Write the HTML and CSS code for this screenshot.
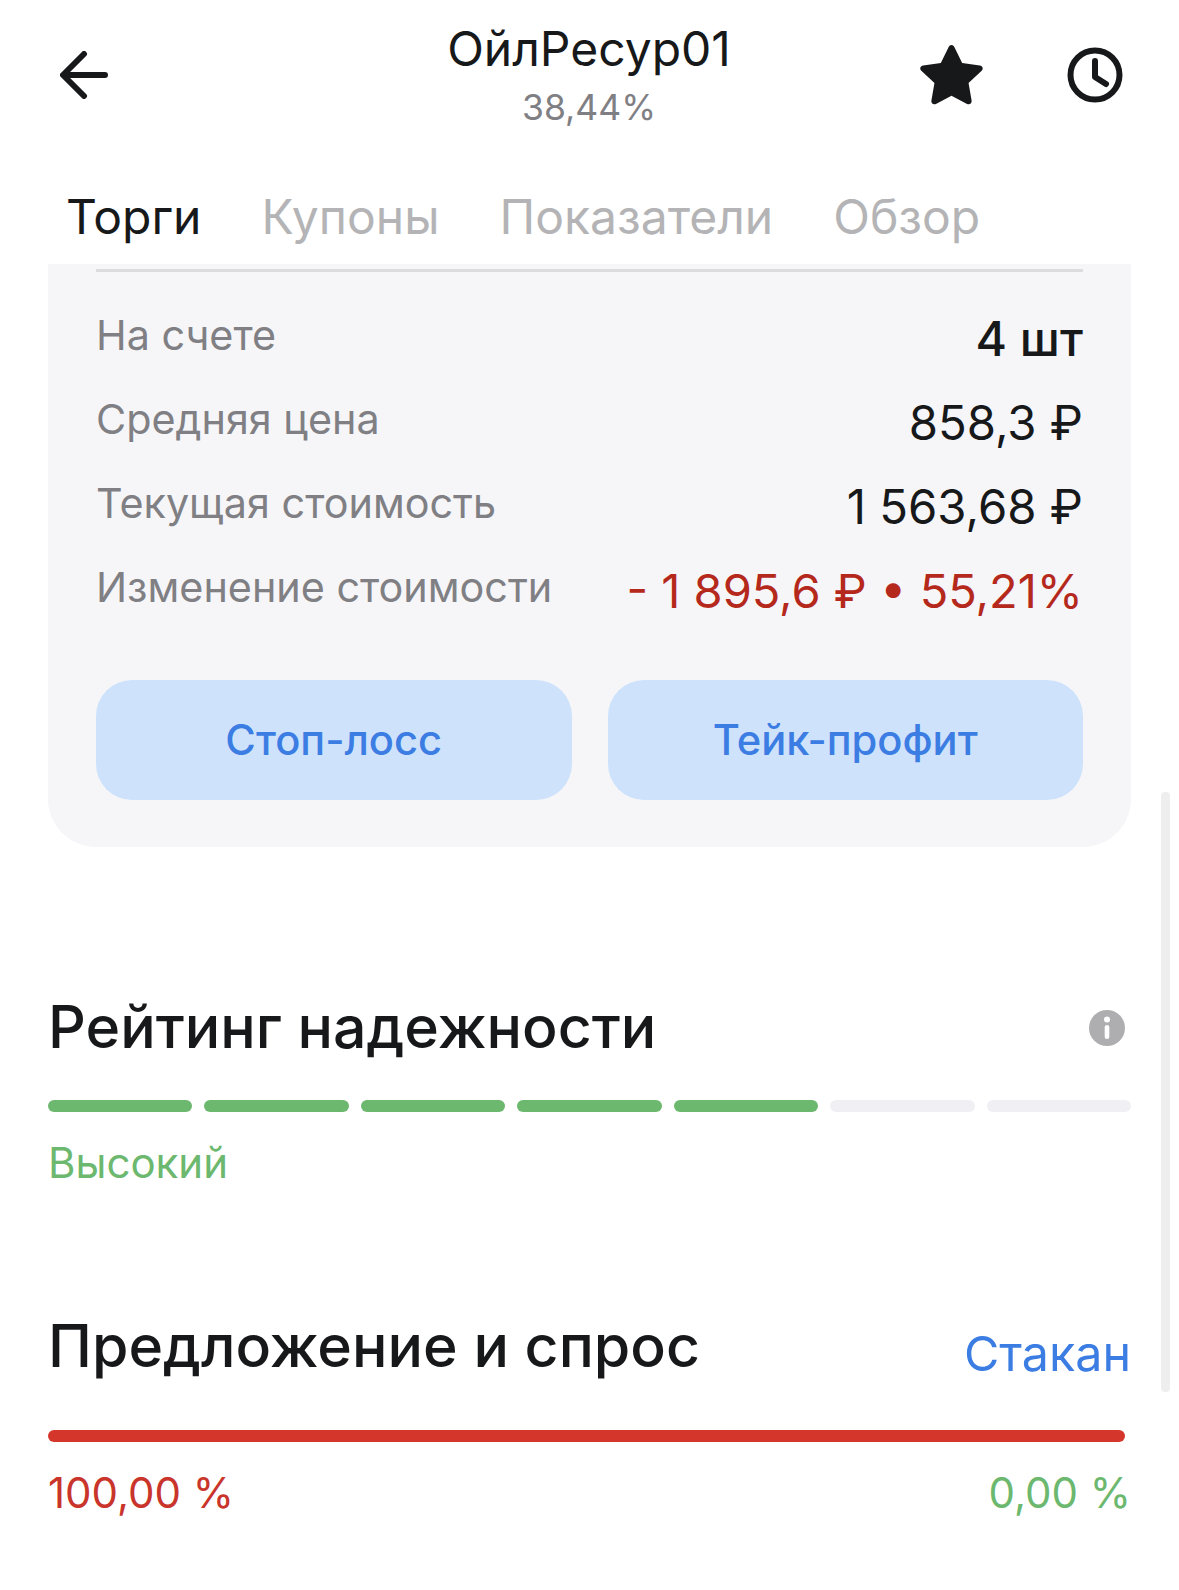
FILE: index.html
```html
<!DOCTYPE html>
<html lang="ru">
<head>
    <meta charset="UTF-8">
    <meta name="viewport" content="width=device-width, initial-scale=1.0">
    <title>ОйлРесур01</title>
    <link rel="stylesheet" href="styles.css">
</head>
<body>
    <header class="top">
        <svg class="back" width="48" height="48" viewBox="0 0 48 48" fill="none" stroke="#17181a" stroke-width="6" stroke-linecap="round" stroke-linejoin="round">
            <path d="M45 24H4M24 3L3 24l21 21"/>
        </svg>
        <div class="top-title">
            <div class="name">ОйлРесур01</div>
            <div class="percent">38,44%</div>
        </div>
        <div class="top-icons">
            <svg width="67" height="63" viewBox="0 0 66 62" fill="#17181a">
                <path d="M33 1c1.300 0 2.200.8 2.800 2l7.700 15.600 17.400 2.500c2.800.4 3.800 3.300 1.800 5.200L49.800 38.400l3 17.300c.5 2.700-2.100 4.600-4.500 3.300L33 50.900 17.700 59c-2.400 1.300-5-.6-4.500-3.300l3-17.300L3.300 26.300c-2-1.900-1-4.800 1.800-5.200l17.400-2.500L30.200 3c.6-1.200 1.500-2 2.800-2z"/>
            </svg>
            <svg width="56" height="56" viewBox="0 0 56 56" fill="none" stroke="#17181a" stroke-width="6" stroke-linecap="round" stroke-linejoin="round">
                <circle cx="28" cy="28" r="24.500"/>
                <path d="M28 14v16l11 7"/>
            </svg>
        </div>
    </header>

    <nav class="tabs">
        <span class="tab active">Торги</span>
        <span class="tab">Купоны</span>
        <span class="tab">Показатели</span>
        <span class="tab">Обзор</span>
    </nav>

    <section class="panel">
        <div class="divider"></div>
        <div class="row">
            <span class="label">На счете</span>
            <span class="value count">4 шт</span>
        </div>
        <div class="row">
            <span class="label">Средняя цена</span>
            <span class="value">858,3 ₽</span>
        </div>
        <div class="row">
            <span class="label">Текущая стоимость</span>
            <span class="value">1 563,68 ₽</span>
        </div>
        <div class="row">
            <span class="label">Изменение стоимости</span>
            <span class="value loss">- 1 895,6 ₽ • 55,21%</span>
        </div>
        <div class="actions">
            <button class="action">Стоп-лосс</button>
            <button class="action">Тейк-профит</button>
        </div>
    </section>

    <section class="rating">
        <div class="section-head">
            <h2>Рейтинг надежности</h2>
            <svg width="36" height="36" viewBox="0 0 36 36">
                <circle cx="18" cy="18" r="18" fill="#aeaeb0"/>
                <circle cx="18" cy="9.500" r="3" fill="#fff"/>
                <rect x="15.700" y="15" width="4.600" height="14" rx="2.300" fill="#fff"/>
            </svg>
        </div>
        <div class="segments">
            <i class="on"></i><i class="on"></i><i class="on"></i><i class="on"></i><i class="on"></i><i></i><i></i>
        </div>
        <div class="rating-text">Высокий</div>
    </section>

    <section class="orders">
        <div class="section-head">
            <h2>Предложение и спрос</h2>
            <span class="link">Стакан</span>
        </div>
        <div class="bar"></div>
        <div class="shares">
            <span class="sell">100,00 %</span>
            <span class="buy">0,00 %</span>
        </div>
    </section>

    <div class="scrollbar"></div>
</body>
</html>
```

FILE: styles.css
```css
body {
    position: relative;
    width: 1179px;
    height: 1590px;
    margin: 0;
    overflow: hidden;
    background: #fff;
    color: #17181a;
    font-family: Inter, "Noto Sans", sans-serif;
}
.top {
    display: grid;
    grid-template-columns: 1fr auto 1fr;
    align-items: center;
    height: 150px;
    padding: 0 56px 0 60px;
}
.top-title {
    margin-right: 5px;
    text-align: center;
}
.name {
    font-size: 48px;
    line-height: 58px;
}
.percent {
    font-size: 35.500px;
    line-height: 44px;
    color: #808084;
    margin-top: 8px;
}
.top-icons {
    display: flex;
    align-items: center;
    justify-content: flex-end;
    gap: 82px;
}
.tabs {
    display: flex;
    gap: 60px;
    height: 114px;
    padding: 39px 0 0 66px;
    box-sizing: border-box;
    font-size: 48px;
    line-height: 56px;
}
.tab {
    color: #b4b4b6;
}
.tab.active {
    color: #17181a;
}
.panel {
    margin: 0 48px;
    height: 583px;
    padding: 5px 48px 0;
    box-sizing: border-box;
    background: #f6f6f9;
    border-radius: 0 0 48px 48px;
}
.divider {
    height: 3px;
    background: #dcdcde;
    margin-bottom: 24px;
}
.row {
    display: flex;
    justify-content: space-between;
    align-items: center;
    height: 84px;
}
.label {
    font-size: 41.300px;
    color: #808084;
    margin-bottom: 6px;
}
.value {
    font-size: 47.300px;
}
.count {
    font-size: 48px;
    font-weight: 500;
}
.loss {
    font-size: 47px;
    color: #b5291d;
}
.actions {
    display: grid;
    grid-template-columns: 1fr 1fr;
    gap: 36px;
    margin-top: 48px;
}
.action {
    height: 120px;
    border: none;
    border-radius: 36px;
    background: #cfe2fc;
    color: #3b7de3;
    font-family: inherit;
    font-size: 41.700px;
    font-weight: 450;
}
.rating {
    margin: 146px 48px 0;
}
.section-head {
    display: flex;
    justify-content: space-between;
    align-items: center;
}
.section-head h2 {
    margin: 0;
    font-size: 59px;
    font-weight: 450;
    line-height: 68px;
}
.section-head svg {
    margin: 2px 6px 0 0;
}
.segments {
    display: grid;
    grid-template-columns: repeat(7, 1fr);
    gap: 12px;
    margin-top: 39px;
}
.segments i {
    height: 12px;
    border-radius: 6px;
    background: #f0f0f4;
}
.segments i.on {
    background: #6cb86f;
}
.rating-text {
    margin-top: 27px;
    font-size: 42px;
    line-height: 48px;
    color: #6cb86f;
}
.orders {
    margin: 122px 48px 0;
}
.link {
    font-size: 48.400px;
    color: #3b7de3;
    margin-top: 15px;
}
.bar {
    height: 12px;
    margin: 47px 6px 0 0;
    border-radius: 6px;
    background: #d5362c;
}
.shares {
    display: flex;
    justify-content: space-between;
    margin-top: 26px;
    font-size: 42px;
    line-height: 50px;
}
.sell {
    color: #c9342b;
}
.buy {
    color: #6cb86f;
}
.scrollbar {
    position: absolute;
    left: 1161px;
    top: 792px;
    width: 9px;
    height: 600px;
    border-radius: 4px;
    background: #eeeeef;
}
```
